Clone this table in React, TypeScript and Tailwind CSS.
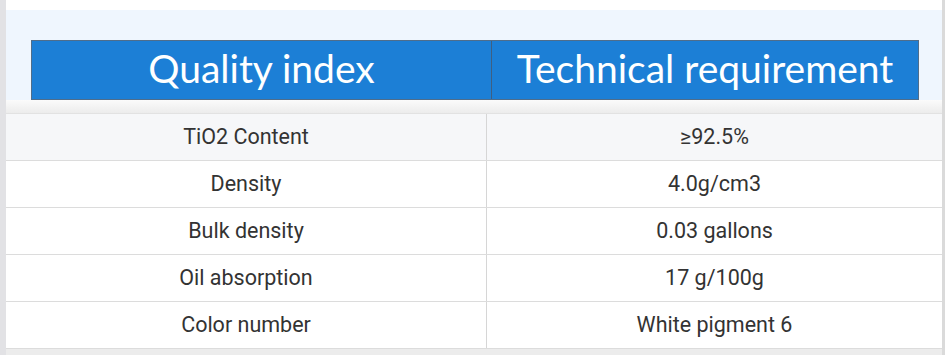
import React from 'react';

const rows: [string, string][] = [
    ['TiO2 Content', '≥92.5%'],
    ['Density', '4.0g/cm3'],
    ['Bulk density', '0.03 gallons'],
    ['Oil absorption', '17 g/100g'],
    ['Color number', 'White pigment 6'],
];

const App: React.FC = () => {
    return (
        <div className="w-[945px] h-[355px] flex bg-white overflow-hidden">
            {/* left edge strip */}
            <div className="w-[6px] h-full bg-[#e2e2e5]" />

            <div className="flex-1 flex flex-col">
                <div className="h-[10px] bg-white" />

                {/* blue heading image area */}
                <div className="h-[90px] bg-[#eff6fe] pt-[30px] pl-[25px] pr-[23px]">
                    <div
                        className="h-[60px] flex bg-[#1c7fd6] border border-[#4f6d8b] text-white"
                        style={{ fontFamily: 'Lato, "Open Sans", sans-serif' }}
                    >
                        <div className="w-[460px] flex items-center justify-center text-[39px] font-normal leading-none pb-[3px] border-r border-[#3e5f82]">
                            Quality index
                        </div>
                        <div className="flex-1 flex items-center justify-center text-[39px] font-normal leading-none pb-[3px]">
                            Technical requirement
                        </div>
                    </div>
                </div>

                {/* shadow gap above table */}
                <div className="h-[14px] bg-gradient-to-b from-[#fbfbfb] to-[#ececec] border-b border-[#e2e2e2]" />

                {/* data table */}
                <div
                    className="flex flex-col text-[21.5px] text-[#333]"
                    style={{ fontFamily: 'Roboto, "Liberation Sans", sans-serif' }}
                >
                    {rows.map(([name, value], i) => (
                        <div
                            key={name}
                            className={`h-[47px] flex border-b border-[#dcdcdc] ${i === 0 ? 'bg-[#f6f7f9]' : 'bg-white'}`}
                        >
                            <div className="w-[481px] flex items-center justify-center border-r border-[#d6d6d6]">
                                {name}
                            </div>
                            <div className="flex-1 flex items-center justify-center">
                                {value}
                            </div>
                        </div>
                    ))}
                </div>

                <div className="flex-1 bg-[#ececec]" />
            </div>

            {/* right edge strip */}
            <div className="w-[3px] h-full bg-[#dadada]" />
        </div>
    );
};

export default App;
